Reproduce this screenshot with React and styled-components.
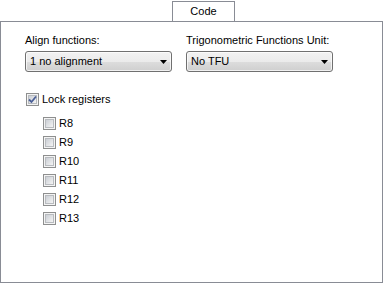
import React from "react";
import styled, { createGlobalStyle } from "styled-components";

const Global = createGlobalStyle`
  html, body { margin: 0; padding: 0; background: #ffffff; }
  body { font-family: "Liberation Sans", Arial, sans-serif; font-size: 11px; color: #000; }
`;

const Frame = styled.div`
  width: 383px;
  height: 283px;
  display: flex;
  flex-direction: column;
  background: #ffffff;
`;

const TabStrip = styled.div`
  display: flex;
  height: 21px;
  align-items: flex-start;
`;

const Tab = styled.div`
  position: relative;
  z-index: 1;
  margin-left: 172px;
  margin-top: 1px;
  width: 63px;
  height: 20px;
  margin-bottom: -1px;
  border: 1px solid #898c95;
  border-bottom: none;
  background: #ffffff;
  display: flex;
  justify-content: center;
  padding-top: 3px;
  box-sizing: border-box;
  line-height: 13px;
`;

const Panel = styled.div`
  flex: 1;
  border: 1px solid #898c95;
  box-sizing: border-box;
  padding: 12px 0 0 24px;
  display: flex;
  flex-direction: column;
`;

const Fields = styled.div`
  display: grid;
  grid-template-columns: 147px 147px;
  column-gap: 14px;
`;

const Field = styled.div`
  display: flex;
  flex-direction: column;
  gap: 4px;
`;

const Label = styled.div`
  line-height: 13px;
  height: 13px;
  white-space: nowrap;
`;

const Combo = styled.div`
  height: 21px;
  box-sizing: border-box;
  border: 1px solid #707070;
  border-radius: 3px;
  background: linear-gradient(#f2f2f2 0%, #ebebeb 50%, #dddddd 51%, #cfcfcf 100%);
  box-shadow: inset 0 0 0 1px rgba(255,255,255,0.7);
  display: flex;
  align-items: center;
  justify-content: space-between;
  padding: 0 4px 0 4px;
  line-height: 13px;
`;

const Arrow = styled.svg`
  width: 7px;
  height: 4px;
  display: block;
`;

const Checks = styled.div`
  margin-top: 21px;
  display: flex;
  flex-direction: column;
  gap: 6px;
`;

const SubList = styled.div`
  margin-top: 11px;
  padding-left: 17px;
  display: flex;
  flex-direction: column;
  gap: 6px;
`;

const CheckRow = styled.label`
  display: flex;
  align-items: center;
  gap: 3px;
  height: 13px;
  line-height: 13px;
  padding-left: 1px;
`;

const Box = styled.span`
  width: 13px;
  height: 13px;
  box-sizing: border-box;
  border: 1px solid #8e8f8f;
  background: #f4f4f4;
  display: flex;
  align-items: center;
  justify-content: center;
  position: relative;
  &::before {
    content: "";
    position: absolute;
    inset: 1px;
    background: linear-gradient(135deg, #cbcfd5 0%, #dfe1e4 50%, #f4f4f4 100%);
    border: 1px solid #b8bbbf;
    box-sizing: border-box;
  }
`;

const Tick = styled.svg`
  position: relative;
  z-index: 1;
  width: 9px;
  height: 9px;
`;

function Check({ checked, label }) {
  return (
    <CheckRow>
      <Box>
        {checked && (
          <Tick viewBox="0 0 9 9">
            <path d="M1 4.5 L3.5 7 L8 1.5" fill="none" stroke="#4a5f97" strokeWidth="1.8" />
          </Tick>
        )}
      </Box>
      <span>{label}</span>
    </CheckRow>
  );
}

function Select({ value }) {
  return (
    <Combo>
      <span>{value}</span>
      <Arrow viewBox="0 0 7 4">
        <path d="M0 0 H7 L3.5 4 Z" fill="#000" />
      </Arrow>
    </Combo>
  );
}

export default function App() {
  const regs = ["R8", "R9", "R10", "R11", "R12", "R13"];
  return (
    <>
      <Global />
      <Frame>
        <TabStrip>
          <Tab>Code</Tab>
        </TabStrip>
        <Panel>
          <Fields>
            <Field>
              <Label>Align functions:</Label>
              <Select value="1 no alignment" />
            </Field>
            <Field>
              <Label>Trigonometric Functions Unit:</Label>
              <Select value="No TFU" />
            </Field>
          </Fields>
          <Checks>
            <Check checked label="Lock registers" />
          </Checks>
          <SubList>
            {regs.map((r) => (
              <Check key={r} label={r} />
            ))}
          </SubList>
        </Panel>
      </Frame>
    </>
  );
}
